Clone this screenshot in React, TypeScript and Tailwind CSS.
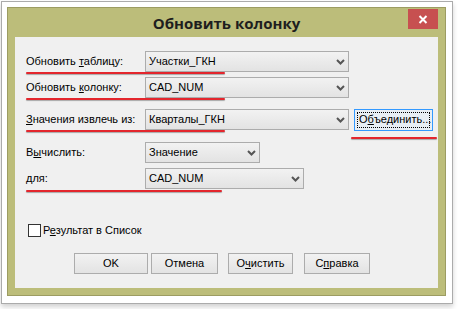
import React from "react";

const font = { fontFamily: '"Liberation Sans", Arial, sans-serif' };

function Chevron() {
  return (
    <svg width="9" height="6" viewBox="0 0 9 6" className="shrink-0">
      <path d="M1 1 L4.5 4.5 L8 1" fill="none" stroke="#555" strokeWidth="2" />
    </svg>
  );
}

function Combo({ w, text }: { w: string; text: string }) {
  return (
    <div
      className={`${w} h-[21px] border border-[#acacac] bg-gradient-to-b from-[#f2f2f2] to-[#e3e3e3] flex items-center justify-between pl-[3px] pr-[3px] text-[11px] text-black`}
    >
      <span>{text}</span>
      <Chevron />
    </div>
  );
}

function Btn({ w, children, ml }: { w: string; children: React.ReactNode; ml: string }) {
  return (
    <div
      className={`${w} ${ml} h-[21px] border border-[#acacac] bg-gradient-to-b from-[#f2f2f2] to-[#e3e3e3] flex items-center justify-center text-[11px] text-black`}
    >
      {children}
    </div>
  );
}

function RedLine({ cls }: { cls: string }) {
  return (
    <div
      className={`absolute h-[2px] bg-[#e3262d] rounded-full shadow-[0_1px_1px_rgba(0,0,0,0.3)] ${cls}`}
    />
  );
}

export default function App() {
  return (
    <div className="w-[459px] h-[309px] bg-white overflow-hidden" style={font}>
      <div className="ml-[1px] mt-[1px] w-[452px] h-[303px] border border-[#ababab] bg-white p-[5px] shadow-[0_3px_5px_rgba(0,0,0,0.18)]">
        <div className="w-[439px] h-[289px] border border-[#9c9c62] bg-[#bcbd7a] flex flex-col px-[7px] pb-[7px]">
          <div className="relative h-[29px] shrink-0 flex items-center justify-center">
            <span
              className="text-[15px] font-bold text-[#1e1e1e] mt-[1px]"
              style={{ fontFamily: '"Open Sans", "Noto Sans", sans-serif' }}
            >
              Обновить колонку
            </span>
            <div className="absolute right-0 top-[1px] w-[30px] h-[20px] bg-[#c75050] flex items-center justify-center">
              <svg width="10" height="9" viewBox="0 0 10 9">
                <path d="M1.5 1 L8.5 8 M8.5 1 L1.5 8" stroke="#fff" strokeWidth="2" />
              </svg>
            </div>
          </div>
          <div className="relative flex-1 bg-[#f0f0f0] flex flex-col pt-[14px] pl-[11px] text-[11px] text-black">
            <div className="flex items-center h-[21px]">
              <div className="w-[119px]">
                Обновить <u>т</u>аблицу:
              </div>
              <Combo w="w-[204px]" text="Участки_ГКН" />
            </div>
            <div className="flex items-center h-[21px] mt-[5px]">
              <div className="w-[119px]">
                Обновить <u>к</u>олонку:
              </div>
              <Combo w="w-[204px]" text="CAD_NUM" />
            </div>
            <div className="flex items-center h-[21px] mt-[11px]">
              <div className="w-[119px]">
                <u>З</u>начения извлечь из:
              </div>
              <Combo w="w-[204px]" text="Кварталы_ГКН" />
              <div className="ml-[5px] w-[79px] h-[22px] border border-[#3399ff] bg-[#e8eef4] p-[2px]">
                <div className="w-full h-full border border-dotted border-black flex items-center pl-[1px]">
                  О<u>б</u>ъединить...
                </div>
              </div>
            </div>
            <div className="flex items-center h-[21px] mt-[12px]">
              <div className="w-[119px]">
                В<u>ы</u>числить:
              </div>
              <Combo w="w-[115px]" text="Значение" />
            </div>
            <div className="flex items-center h-[21px] mt-[5px]">
              <div className="w-[119px]">
                <u>д</u>ля:
              </div>
              <Combo w="w-[159px]" text="CAD_NUM" />
            </div>
            <div className="flex items-center mt-[35px] ml-[2px] h-[13px]">
              <div className="w-[13px] h-[13px] border border-[#333] bg-white" />
              <div className="ml-[2px]">
                Р<u>е</u>зультат в Список
              </div>
            </div>
            <div className="flex mt-[16px]">
              <Btn w="w-[74px]" ml="ml-[48px]">OK</Btn>
              <Btn w="w-[67px]" ml="ml-[3px]">Отмена</Btn>
              <Btn w="w-[65px]" ml="ml-[10px]">
                <span>
                  О<u>ч</u>истить
                </span>
              </Btn>
              <Btn w="w-[66px]" ml="ml-[11px]">
                <span>
                  С<u>п</u>равка
                </span>
              </Btn>
            </div>
            <RedLine cls="left-[11px] top-[35px] w-[199px]" />
            <RedLine cls="left-[11px] top-[61px] w-[199px]" />
            <RedLine cls="left-[11px] top-[93px] w-[199px]" />
            <RedLine cls="left-[336px] top-[100px] w-[86px]" />
            <RedLine cls="left-[11px] top-[153px] w-[196px]" />
          </div>
        </div>
      </div>
    </div>
  );
}
